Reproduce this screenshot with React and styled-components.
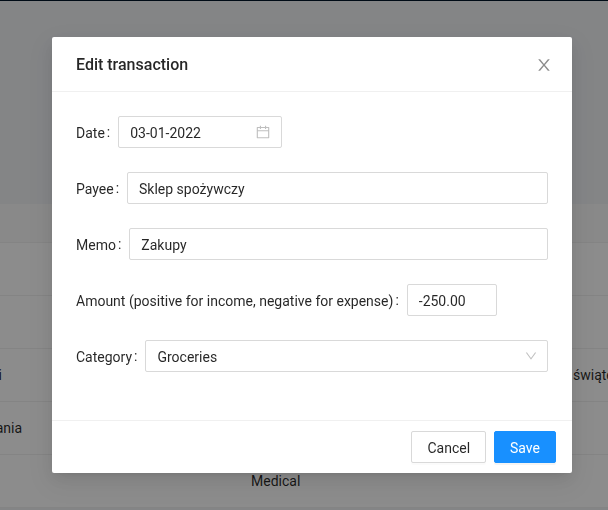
import React from "react";
import styled, { createGlobalStyle } from "styled-components";

const GlobalStyle = createGlobalStyle`
  *, *::before, *::after { box-sizing: border-box; }
  body {
    margin: 0;
    overflow: hidden;
    font-family: Roboto, "Liberation Sans", sans-serif;
    font-size: 14px;
    line-height: 22px;
    color: rgba(0, 0, 0, 0.85);
    background: #f0f2f5;
  }
`;

const Page = styled.div`
  height: 510px;
  overflow: hidden;
`;

const TopBar = styled.header`
  height: 1px;
  background: #001529;
`;

const Table = styled.div`
  margin-top: 203px;
  background: #fff;
`;

const TableHead = styled.div`
  height: 39px;
  background: #fafafa;
  border-bottom: 1px solid #f0f0f0;
`;

const TableRow = styled.div`
  display: grid;
  grid-template-columns: 235px 322px 1fr;
  align-items: center;
  height: 53px;
  border-bottom: 1px solid #f0f0f0;
`;

const Cell = styled.div`
  padding-left: ${(p) => (p.$first ? 0 : 16)}px;
  white-space: nowrap;
  overflow: hidden;
`;

const ClippedText = styled.span`
  display: flex;
  justify-content: flex-end;
  width: ${(p) => p.$width}px;
  overflow: hidden;
`;

const Mask = styled.div`
  position: fixed;
  inset: 0;
  display: flex;
  justify-content: center;
  align-items: flex-start;
  padding: 37px 36px 0 52px;
  background: rgba(0, 0, 0, 0.45);
`;

const Dialog = styled.section`
  width: 520px;
  background: #fff;
  border-radius: 2px;
  box-shadow:
    0 3px 6px -4px rgba(0, 0, 0, 0.12),
    0 6px 16px 0 rgba(0, 0, 0, 0.08),
    0 9px 28px 8px rgba(0, 0, 0, 0.05);
`;

const DialogHeader = styled.div`
  display: flex;
  justify-content: space-between;
  align-items: center;
  height: 55px;
  padding-left: 24px;
  border-bottom: 1px solid #f0f0f0;
`;

const Title = styled.h1`
  margin: 0;
  padding-top: 2px;
  font-size: 16px;
  font-weight: 500;
  line-height: 22px;
`;

const CloseButton = styled.button`
  display: flex;
  align-items: center;
  justify-content: center;
  width: 56px;
  height: 56px;
  margin-bottom: -2px;
  padding: 0;
  border: 0;
  background: transparent;
  color: rgba(0, 0, 0, 0.45);
`;

const DialogBody = styled.div`
  padding: 24px;
`;

const FormRow = styled.div`
  display: flex;
  align-items: center;
  height: 32px;
  margin-bottom: 24px;
`;

const Label = styled.label`
  flex: none;
  padding-top: 2px;
  white-space: nowrap;

  &::after {
    content: ":";
    position: relative;
    top: -1px;
    margin: 0 8px 0 2px;
  }
`;

const Control = styled.div`
  display: flex;
  align-items: center;
  flex: ${(p) => (p.$width ? "none" : "1")};
  width: ${(p) => (p.$width ? `${p.$width}px` : "auto")};
  min-width: 0;
  height: 32px;
  padding: 0 ${(p) => p.$padRight || 11}px 0 11px;
  border: 1px solid #d9d9d9;
  border-radius: 2px;
  background: #fff;
  color: rgba(0, 0, 0, 0.25);
`;

const Input = styled.input`
  flex: 1;
  min-width: 0;
  height: 24px;
  padding: 2px 0 0;
  border: 0;
  outline: 0;
  background: transparent;
  font: inherit;
  color: rgba(0, 0, 0, 0.85);
`;

const SelectedValue = styled.span`
  flex: 1;
  padding-top: 2px;
  color: rgba(0, 0, 0, 0.85);
`;

const DialogFooter = styled.div`
  display: flex;
  justify-content: flex-end;
  gap: 8px;
  padding: 10px 16px;
  border-top: 1px solid #f0f0f0;
`;

const Button = styled.button`
  height: 32px;
  padding: 5px 15px 3px;
  border: 1px solid ${(p) => (p.$primary ? "#1890ff" : "#d9d9d9")};
  border-radius: 2px;
  background: ${(p) => (p.$primary ? "#1890ff" : "#fff")};
  color: ${(p) => (p.$primary ? "#fff" : "rgba(0, 0, 0, 0.85)")};
  font: inherit;
  box-shadow: 0 2px 0 rgba(0, 0, 0, ${(p) => (p.$primary ? 0.045 : 0.015)});
`;

const Svg = styled.svg`
  display: block;
  flex: none;
`;

const icons = {
  close:
    "M563.8 512l262.5-312.9c4.4-5.2.7-13.1-6.1-13.1h-79.8c-4.7 0-9.2 2.1-12.3 5.7L511.6 449.8 295.1 191.7c-3-3.6-7.5-5.7-12.3-5.7H203c-6.8 0-10.5 7.9-6.1 13.1L459.4 512 196.9 824.9A7.95 7.95 0 00203 838h79.8c4.7 0 9.2-2.1 12.3-5.7l216.5-258.1 216.5 258.1c3 3.6 7.5 5.7 12.3 5.7h79.8c6.8 0 10.5-7.9 6.1-13.1L563.8 512z",
  calendar:
    "M880 184H712v-64c0-4.4-3.6-8-8-8h-56c-4.4 0-8 3.6-8 8v64H384v-64c0-4.4-3.6-8-8-8h-56c-4.4 0-8 3.6-8 8v64H144c-17.7 0-32 14.3-32 32v664c0 17.7 14.3 32 32 32h736c17.7 0 32-14.3 32-32V216c0-17.7-14.3-32-32-32zm-40 656H184V460h656v380zM184 392V256h128v48c0 4.4 3.6 8 8 8h56c4.4 0 8-3.6 8-8v-48h256v48c0 4.4 3.6 8 8 8h56c4.4 0 8-3.6 8-8v-48h128v136H184z",
  down: "M884 256h-75c-5.1 0-9.9 2.5-12.9 6.6L512 654.2 227.9 262.6c-3-4.1-7.8-6.6-12.9-6.6h-75c-6.5 0-10.3 7.4-6.5 12.7l352.6 486.1c12.8 17.6 39 17.6 51.7 0l352.6-486.1c3.9-5.3.1-12.7-6.4-12.7z",
};

function Icon({ name, size }) {
  return (
    <Svg viewBox="64 64 896 896" width={size} height={size} fill="currentColor" aria-hidden="true">
      <path d={icons[name]} />
    </Svg>
  );
}

const rows = [
  {},
  {},
  { payee: "i", width: 2, memo: "świąteczne" },
  { payee: "ania", width: 22 },
  { category: "Medical" },
];

export default function App() {
  return (
    <>
      <GlobalStyle />
      <Page>
        <TopBar />
        <Table>
          <TableHead />
          {rows.map((row, i) => (
            <TableRow key={i}>
              <Cell $first>{row.payee && <ClippedText $width={row.width}>{row.payee}</ClippedText>}</Cell>
              <Cell>{row.category}</Cell>
              <Cell>{row.memo}</Cell>
            </TableRow>
          ))}
        </Table>
      </Page>
      <Mask>
        <Dialog role="dialog" aria-labelledby="dialog-title">
          <DialogHeader>
            <Title id="dialog-title">Edit transaction</Title>
            <CloseButton aria-label="Close">
              <Icon name="close" size={16} />
            </CloseButton>
          </DialogHeader>
          <DialogBody>
            <FormRow>
              <Label htmlFor="date">Date</Label>
              <Control $width={164}>
                <Input id="date" defaultValue="03-01-2022" />
                <Icon name="calendar" size={14} />
              </Control>
            </FormRow>
            <FormRow>
              <Label htmlFor="payee">Payee</Label>
              <Control>
                <Input id="payee" defaultValue="Sklep spożywczy" />
              </Control>
            </FormRow>
            <FormRow>
              <Label htmlFor="memo">Memo</Label>
              <Control>
                <Input id="memo" defaultValue="Zakupy" />
              </Control>
            </FormRow>
            <FormRow>
              <Label htmlFor="amount">Amount (positive for income, negative for expense)</Label>
              <Control $width={90}>
                <Input id="amount" defaultValue="-250.00" />
              </Control>
            </FormRow>
            <FormRow>
              <Label>Category</Label>
              <Control $padRight={10}>
                <SelectedValue>Groceries</SelectedValue>
                <Icon name="down" size={12} />
              </Control>
            </FormRow>
          </DialogBody>
          <DialogFooter>
            <Button>Cancel</Button>
            <Button $primary>Save</Button>
          </DialogFooter>
        </Dialog>
      </Mask>
    </>
  );
}
